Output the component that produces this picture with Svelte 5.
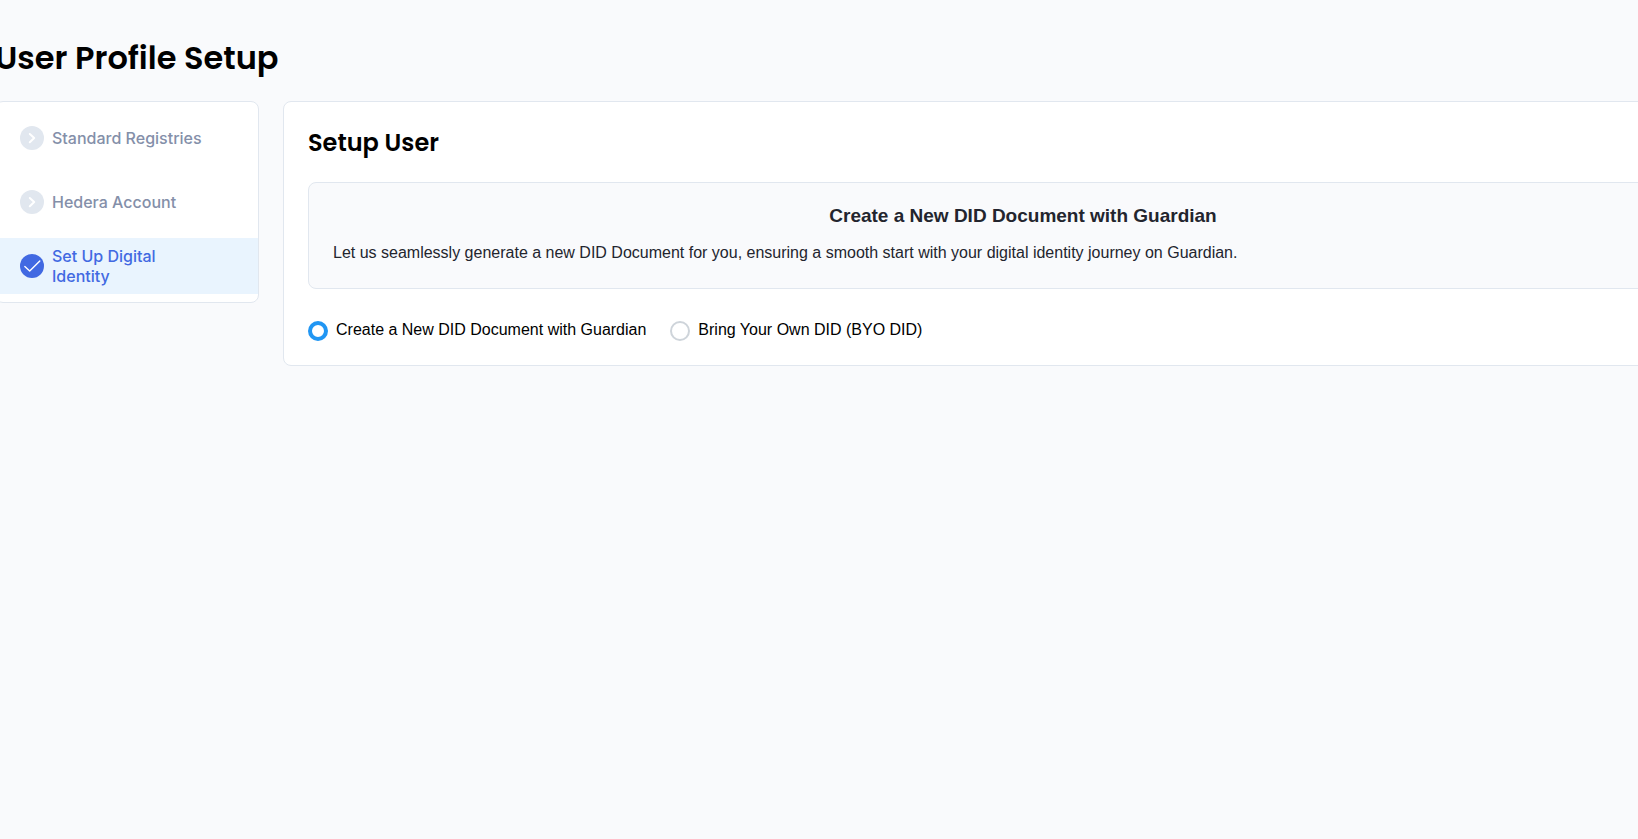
<script>
  const steps = [
    { id: 'registries', label: 'Standard Registries' },
    { id: 'account', label: 'Hedera Account' },
    { id: 'identity', label: 'Set Up Digital Identity' },
  ];
  const options = [
    { id: 'create', label: 'Create a New DID Document with Guardian' },
    { id: 'own', label: 'Bring Your Own DID (BYO DID)' },
  ];
  let current = $state('identity');
  let method = $state('create');
</script>

<main class="viewport">
  <div class="page">
    <h1>User Profile Setup</h1>
    <div class="columns">
      <nav class="steps" aria-label="Setup steps">
        {#each steps as step (step.id)}
          <button
            type="button"
            class="step"
            class:active={current === step.id}
            aria-current={current === step.id ? 'step' : undefined}
            onclick={() => (current = step.id)}
          >
            <svg class="step-icon" viewBox="0 0 24 24" aria-hidden="true">
              <circle cx="12" cy="12" r="12" />
              {#if current === step.id}
                <path d="M4.8 12.6 L9.7 17.1 L19.8 7" stroke-width="1.4" />
              {:else}
                <path d="M9.8 8 L14.2 12.1 L9.8 16.2" stroke-width="2" />
              {/if}
            </svg>
            <span>{step.label}</span>
          </button>
        {/each}
      </nav>

      <section class="card">
        <h2>Setup User</h2>
        <div class="info">
          <h3>Create a New DID Document with Guardian</h3>
          <p>
            Let us seamlessly generate a new DID Document for you, ensuring a smooth start with your
            digital identity journey on Guardian.
          </p>
        </div>
        <div class="options" role="radiogroup" aria-label="DID Document">
          {#each options as option (option.id)}
            <div class="option">
              <input type="radio" id={option.id} name="method" value={option.id} bind:group={method} />
              <label for={option.id}>{option.label}</label>
            </div>
          {/each}
        </div>
      </section>
    </div>
  </div>
</main>

<style>
  :global(body) {
    margin: 0;
    background: #f9fafc;
  }

  .viewport {
    min-height: 100vh;
    overflow: hidden;
    font-family: 'Nimbus Sans', Helvetica, 'Liberation Sans', Arial, sans-serif;
    font-size: 16px;
    line-height: 20px;
    color: #000;
  }

  .page {
    box-sizing: border-box;
    margin: 0 -125px 0 -5px;
    padding-top: 34px;
  }

  h1,
  h2,
  h3,
  p {
    margin: 0;
  }

  h1,
  h2 {
    font-family: Poppins, Inter, sans-serif;
    font-weight: 600;
  }

  h1 {
    font-size: 32px;
    line-height: 48px;
    margin-bottom: 19px;
  }

  .columns {
    display: flex;
    align-items: flex-start;
    gap: 24px;
  }

  .steps,
  .card {
    box-sizing: border-box;
    background: #fff;
    border: 1px solid #e1e7ef;
    border-radius: 8px;
  }

  .steps {
    flex: none;
    width: 264px;
    padding: 8px 0;
    display: flex;
    flex-direction: column;
    gap: 8px;
  }

  .step {
    display: flex;
    align-items: center;
    gap: 8px;
    min-height: 56px;
    padding: 8px 48px 8px 24px;
    border: 0;
    background: transparent;
    font: 500 16px/20px Inter, sans-serif;
    color: #848fa9;
    text-align: left;
    cursor: pointer;
  }

  .step.active {
    background: #e9f4fe;
    color: #4169e2;
  }

  .step-icon {
    flex: none;
    width: 24px;
    height: 24px;
  }

  .step-icon circle {
    fill: #e1e7ef;
  }

  .step.active circle {
    fill: #4169e2;
  }

  .step-icon path {
    fill: none;
    stroke: #fff;
    stroke-linecap: round;
    stroke-linejoin: round;
  }

  .card {
    flex: 1;
    padding: 24px;
  }

  h2 {
    font-size: 24px;
    line-height: 34px;
    margin-bottom: 22px;
  }

  .info {
    padding: 24px;
    border: 1px solid #e1e7ef;
    border-radius: 8px;
    background: #f9fafc;
    color: #23252e;
  }

  h3 {
    font-size: 19px;
    line-height: 17px;
    text-align: center;
    margin-bottom: 18px;
  }

  .info p {
    line-height: 22px;
  }

  .options {
    display: flex;
    flex-wrap: wrap;
    gap: 24px;
    margin-top: 32px;
  }

  .option {
    display: flex;
    align-items: flex-start;
    gap: 8px;
  }

  .option label {
    line-height: 18px;
  }

  .option input {
    appearance: none;
    box-sizing: border-box;
    width: 20px;
    height: 20px;
    margin: 0;
    border: 2px solid #ced4da;
    border-radius: 50%;
    background: #fff;
  }

  .option input:checked {
    border: 4px solid #2196f3;
  }
</style>
